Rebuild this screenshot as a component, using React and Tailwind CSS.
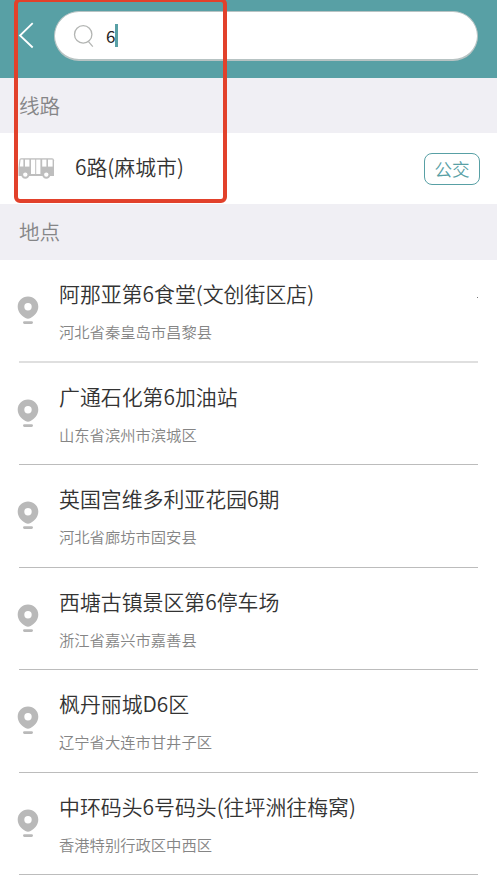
import React, { useState } from "react";

const places = [
  { name: "阿那亚第6食堂(文创街区店)", area: "河北省秦皇岛市昌黎县", row: "h-[103px] border-b-2 border-[#dfdfdf]" },
  { name: "广通石化第6加油站", area: "山东省滨州市滨城区", row: "h-[102px] border-b border-[#bcbcbc]" },
  { name: "英国宫维多利亚花园6期", area: "河北省廊坊市固安县", row: "h-[103px] border-b border-[#bcbcbc]" },
  { name: "西塘古镇景区第6停车场", area: "浙江省嘉兴市嘉善县", row: "h-[102px] border-b border-[#bcbcbc]" },
  { name: "枫丹丽城D6区", area: "辽宁省大连市甘井子区", row: "h-[103px] border-b border-[#bcbcbc]" },
  { name: "中环码头6号码头(往坪洲往梅窝)", area: "香港特别行政区中西区", row: "h-[102px] border-b border-[#bcbcbc]" },
];

function BackIcon() {
  return (
    <svg className="ml-[18px] h-[28px] w-[17px] shrink-0" viewBox="0 0 17 28" fill="none" stroke="#fff" strokeWidth="1.8">
      <path d="M14.7 1.2L2 13.5L14.7 25.5" />
    </svg>
  );
}

function SearchIcon() {
  return (
    <svg className="ml-[18px] h-[24px] w-[22px] shrink-0" viewBox="0 0 22 24" fill="none" stroke="#b3b5b3" strokeWidth="1.3">
      <circle cx="10.2" cy="10.4" r="8.7" />
      <path d="M15.3 17.4L19.8 22.6" />
    </svg>
  );
}

function BusIcon() {
  return (
    <svg className="h-[21px] w-[37px] shrink-0" viewBox="0 0 37 21">
      <path d="M3 0.3H34Q36 0.3 36 2.3V18H0.5V10L1.3 2Q1.5 0.3 3 0.3Z" fill="#bebebe" />
      <g fill="#fff">
        <path d="M2.6 1.6H5.4V8.6H1.8Z" />
        <path d="M7 1.6H11.4V8.6H7Z" />
        <path d="M13 1.6H17.2V16H13Z" />
        <path d="M18.2 1.6H22.4V16H18.2Z" />
        <path d="M24.2 1.6H28.4V8.6H24.2Z" />
        <path d="M30 1.6H34.6V8.6H30Z" />
      </g>
      <g fill="#fff" stroke="#bebebe" strokeWidth="2">
        <circle cx="7.3" cy="16.6" r="3.2" />
        <circle cx="28.3" cy="16.6" r="3.2" />
      </g>
    </svg>
  );
}

function PinIcon() {
  return (
    <svg className="mt-[36px] -ml-[2px] h-[30px] w-[22px] shrink-0" viewBox="0 0 22 30" fill="#b9b9b9">
      <path
        fillRule="evenodd"
        d="M11 0.6C16.8 0.6 21.3 5 21.3 10.6C21.3 16 17.6 19.8 13.6 22Q11 23.4 8.4 22C4.4 19.8 0.7 16 0.7 10.6C0.7 5 5.2 0.6 11 0.6ZM11 7A3.7 3.7 0 1 0 11 14.4A3.7 3.7 0 1 0 11 7Z"
      />
      <rect x="6" y="25.2" width="10" height="2.8" rx="1.4" />
    </svg>
  );
}

function SectionTitle({ children }) {
  return <h2 className="flex items-center bg-[#f0eff4] pb-px pl-[19px] text-[20.6px] text-[#858587]">{children}</h2>;
}

export default function App() {
  const [keyword] = useState("6");

  return (
    <div className="relative h-[883px] w-[497px] overflow-hidden bg-white font-['Noto_Sans_CJK_SC',sans-serif] font-[350]">
      <header className="flex h-[78px] bg-[#58a0a5]">
        <div className="flex h-[72px] w-full items-center">
          <BackIcon />
          <div className="ml-[19px] flex h-[50px] w-[424px] items-center rounded-full border border-b-2 border-[#b7c3c3] bg-white">
            <SearchIcon />
            <span className="ml-[11px] text-[17px] leading-[24px] font-normal text-[#222]">{keyword}</span>
            <span className="h-[23px] w-[3px] bg-[#58a0a5]" />
          </div>
        </div>
      </header>

      <div className="grid h-[55px]">
        <SectionTitle>线路</SectionTitle>
      </div>
      <div className="flex h-[71px] items-center pr-[17px] pl-[18px]">
        <BusIcon />
        <span className="ml-[20px] flex-1 pb-[5px] text-[20.9px] leading-[30px] text-[#333]">6路(麻城市)</span>
        <span className="flex h-[32px] w-[56px] items-center justify-center rounded-lg border border-[#58a0a5] pt-px text-[17.6px] text-[#58a0a5]">
          公交
        </span>
      </div>
      <div className="grid h-[56px]">
        <SectionTitle>地点</SectionTitle>
      </div>

      <ul className="mr-[19px] ml-[19px]">
        {places.map((p, i) => (
          <li key={p.name} className={`flex ${p.row}`}>
            <PinIcon />
            <div className="ml-[20px] flex-1 pt-[18px]">
              <div className="text-[20.9px] leading-[30px] whitespace-nowrap text-[#333]">{p.name}</div>
              <div className="mt-[12px] text-[15.3px] leading-[22px] text-[#858585]">{p.area}</div>
            </div>
            {i === 0 && <span className="mt-[37px] size-px bg-[#777]" />}
          </li>
        ))}
      </ul>

      <div className="pointer-events-none absolute top-[-2px] left-[14px] h-[205px] w-[213px] rounded-[6px] border-4 border-[#e2412b]" />
    </div>
  );
}
